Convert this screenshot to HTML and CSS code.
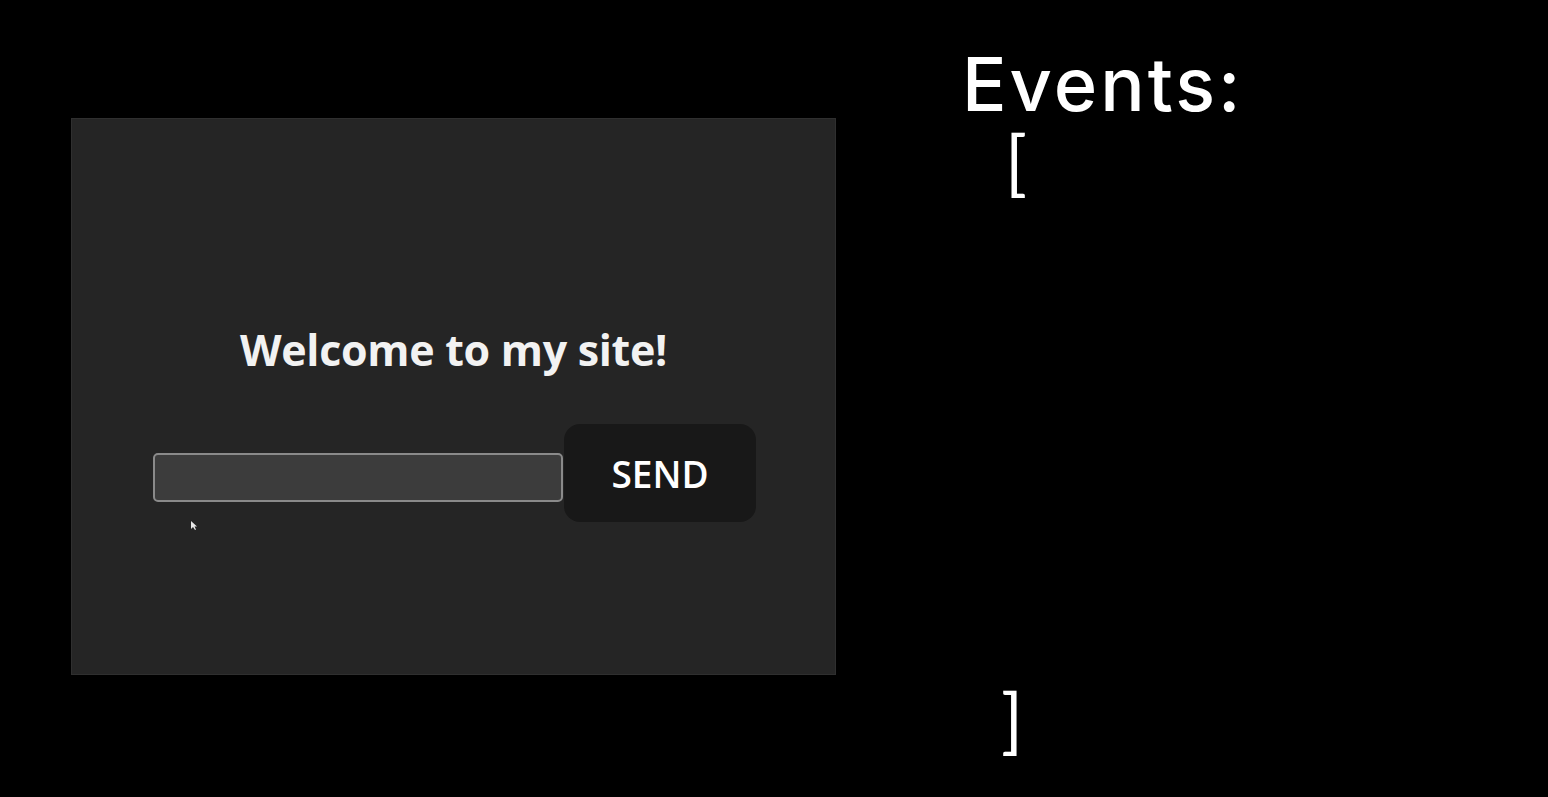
FILE: index.html
```html
<!DOCTYPE html>
<html>
<head>
<meta charset="utf-8">
<link rel="stylesheet" href="styles.css">
</head>
<body>
<div class="page">
  <div class="panel">
    <h1 class="welcome">Welcome to my site!</h1>
    <div class="form">
      <div class="field-wrap">
        <input class="field" type="text">
        <svg class="cursor" width="8" height="11" viewBox="0 0 8 11"><path d="M1 1 L1 9 L3 7 L5 10 L6 9.5 L4.5 6.5 L7 6.5 Z" fill="#e8e8e8"/></svg>
      </div>
      <button class="send">SEND</button>
    </div>
  </div>
  <div class="events">
    <div class="events-title">Events:</div>
    <div class="bracket open">[</div>
    <div class="bracket close">]</div>
  </div>
</div>
</body>
</html>
```
FILE: styles.css
```css
html, body {
  margin: 0;
  padding: 0;
  background: #000;
  height: 100%;
}
.page {
  display: flex;
  width: 1548px;
  height: 797px;
}
.panel {
  margin-left: 71px;
  margin-top: 118px;
  width: 763px;
  height: 555px;
  background: #252525;
  border: 1px solid #2f2f2f;
  display: flex;
  flex-direction: column;
  align-items: center;
  box-sizing: content-box;
}
.welcome {
  margin: 203px 0 0 0;
  font-family: "Open Sans", "Noto Sans", sans-serif;
  font-weight: 700;
  font-size: 43px;
  line-height: 56px;
  color: #f2f2f2;
  letter-spacing: -0.3px;
}
.form {
  display: flex;
  align-items: flex-start;
  margin-top: 46px;
  margin-left: 2px;
}
.field-wrap {
  position: relative;
  margin-top: 29px;
}
.field {
  width: 410px;
  height: 49px;
  box-sizing: border-box;
  background: #3c3c3c;
  border: 2px solid #8a8a8a;
  border-radius: 5px;
  outline: none;
  display: block;
  margin: 0;
}
.cursor {
  position: absolute;
  left: 37px;
  top: 67px;
}
.send {
  width: 192px;
  height: 98px;
  margin-left: 1px;
  background: #181818;
  border: none;
  border-radius: 16px;
  color: #fff;
  font-family: "Open Sans", "Noto Sans", sans-serif;
  font-weight: 600;
  font-size: 37px;
  padding: 0;
}
.events {
  margin-left: 126px;
  display: flex;
  flex-direction: column;
}
.events-title {
  margin-top: 44px;
  font-family: "Inter", "Lato", sans-serif;
  font-weight: 500;
  font-size: 74px;
  line-height: 80px;
  color: #fff;
  letter-spacing: 3px;
}
.bracket {
  font-family: "Lato", sans-serif;
  font-weight: 400;
  font-size: 72px;
  line-height: 72px;
  color: #fff;
}
.open {
  margin-left: 43px;
  margin-top: 0;
}
.close {
  margin-left: 39px;
  margin-top: 486px;
}
```
